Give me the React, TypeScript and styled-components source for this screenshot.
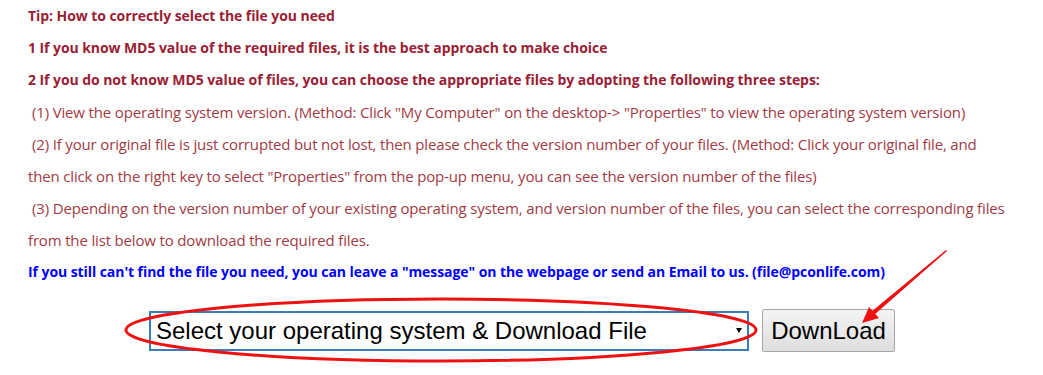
import styled, { createGlobalStyle } from 'styled-components'
import { FC } from 'react'

const GlobalStyle = createGlobalStyle`
  body {
    margin: 0;
    background: #fff;
  }
`

const Page = styled.div`
  position: relative;
  width: 1043px;
  height: 375px;
  overflow: hidden;
  font-family: 'Open Sans', 'Liberation Sans', sans-serif;
`

const Tips = styled.div`
  padding: 0 0 0 28px;
`

const Line = styled.p<{ $tone: 'head' | 'step' | 'note'; $indent?: boolean }>`
  margin: 0;
  line-height: 32px;
  font-size: ${({ $tone }) => ($tone === 'step' ? '15px' : '14px')};
  white-space: nowrap;
  padding-left: ${({ $indent }) => ($indent ? '4px' : '0')};
  font-weight: ${({ $tone }) => ($tone === 'step' ? 400 : 700)};
  letter-spacing: ${({ $tone }) => ($tone === 'step' ? '-0.16px' : '-0.07px')};
  color: ${({ $tone }) =>
    $tone === 'note' ? '#0000ff' : $tone === 'head' ? '#9a2135' : '#a23a45'};
`

const DownloadRow = styled.div`
  display: flex;
  justify-content: center;
  align-items: center;
  gap: 13px;
  margin-top: 21px;
  padding-left: 1px;
`

const SelectWrap = styled.div`
  position: relative;
`

const SystemSelect = styled.select`
  display: block;
  width: 600px;
  height: 40px;
  border: 2px solid #3a7cc0;
  border-radius: 0;
  background: #fff;
  appearance: none;
  font-family: 'Liberation Sans', Arial, sans-serif;
  font-size: 24px;
  color: #000;
  padding: 0 5px;
  outline: none;
`

const Caret = styled.span`
  position: absolute;
  right: 7px;
  top: 17px;
  width: 0;
  height: 0;
  border-left: 3.5px solid transparent;
  border-right: 3.5px solid transparent;
  border-top: 5px solid #000;
  pointer-events: none;
`

const DownloadButton = styled.button`
  height: 43px;
  width: 133px;
  padding: 0;
  border: 1px solid #a6a6a6;
  border-radius: 2px;
  background: linear-gradient(#f4f4f4, #dedede);
  font-family: 'Liberation Sans', Arial, sans-serif;
  font-size: 24px;
  color: #000;
`

const Annotation = styled.svg`
  position: absolute;
  left: 0;
  top: 0;
  pointer-events: none;
`

const Marks: FC = () => (
  <Annotation width={1043} height={375} viewBox="0 0 1043 375">
    <ellipse cx={441} cy={330} rx={315} ry={31} fill="none" stroke="#ee1111" strokeWidth={3} />
    <polygon points="946,250 947,251 874,315 871,312" fill="#ee1111" />
    <polygon points="862,323 869,307 879,318" fill="#ee1111" />
  </Annotation>
)

export default function App() {
  return (
    <Page>
      <GlobalStyle />
      <Tips>
        <Line $tone="head">Tip: How to correctly select the file you need</Line>
        <Line $tone="head">1 If you know MD5 value of the required files, it is the best approach to make choice</Line>
        <Line $tone="head">
          2 If you do not know MD5 value of files, you can choose the appropriate files by adopting the following three steps:
        </Line>
        <Line $tone="step" $indent>
          (1) View the operating system version. (Method: Click "My Computer" on the desktop-&gt; "Properties" to view the operating system version)
        </Line>
        <Line $tone="step" $indent>
          (2) If your original file is just corrupted but not lost, then please check the version number of your files. (Method: Click your original file, and
        </Line>
        <Line $tone="step">
          then click on the right key to select "Properties" from the pop-up menu, you can see the version number of the files)
        </Line>
        <Line $tone="step" $indent>
          (3) Depending on the version number of your existing operating system, and version number of the files, you can select the corresponding files
        </Line>
        <Line $tone="step">from the list below to download the required files.</Line>
        <Line $tone="note">
          If you still can't find the file you need, you can leave a "message" on the webpage or send an Email to us. (file@pconlife.com)
        </Line>
      </Tips>
      <DownloadRow>
        <SelectWrap>
          <SystemSelect defaultValue="">
            <option value="">Select your operating system &amp; Download File</option>
          </SystemSelect>
          <Caret />
        </SelectWrap>
        <DownloadButton>DownLoad</DownloadButton>
      </DownloadRow>
      <Marks />
    </Page>
  )
}
